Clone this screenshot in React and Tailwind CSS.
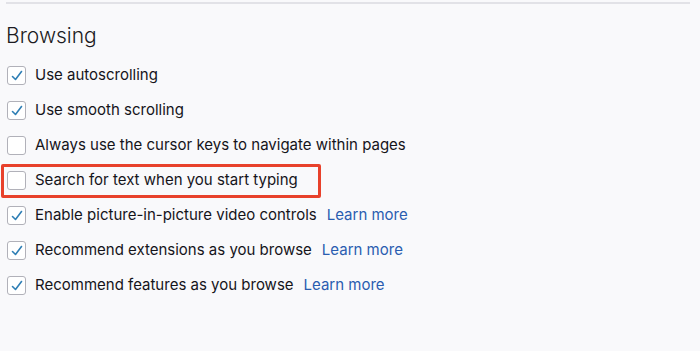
const rows = [
  { label: "Use autoscrolling", checked: true },
  { label: "Use smooth scrolling", checked: true },
  { label: "Always use the cursor keys to navigate within pages", checked: false },
  { label: "Search for text when you start typing", checked: false, highlight: true },
  { label: "Enable picture-in-picture video controls", checked: true, link: true },
  { label: "Recommend extensions as you browse", checked: true, link: true },
  { label: "Recommend features as you browse", checked: true, link: true },
];

const Checkbox = ({ checked }) => (
  <div className="w-[19px] h-[19px] shrink-0 rounded-[3px] border border-[#b1b1b9] bg-white flex items-center justify-center">
    {checked && (
      <svg width="12" height="12" viewBox="0 0 12 12" fill="none">
        <path d="M1.5 6.5 L4.5 9.5 L10.5 1.5" stroke="#2f7fb5" strokeWidth="1.6" strokeLinecap="round" strokeLinejoin="round" />
      </svg>
    )}
  </div>
);

export default function App() {
  return (
    <div className="w-[700px] h-[351px] bg-[#f9f9fb] overflow-hidden" style={{ fontFamily: 'Inter, "Liberation Sans", sans-serif' }}>
      <div className="pt-[2px] pl-[6px] pr-[10px]">
        <div className="h-[2px] bg-[#e2e2e7]"></div>
      </div>
      <h1 className="ml-[6px] mt-[18px] text-[21px] font-light text-[#1c1b22] leading-[28px]">Browsing</h1>
      <div className="mt-[8px] flex flex-col">
        {rows.map((r) => (
          <div key={r.label} className="h-[35px] flex items-center">
            <div
              className={
                r.highlight
                  ? "flex items-center h-[34px] w-[320px] ml-[1px] pl-[3px] border-[3px] border-[#e8412b] rounded-[2px]"
                  : "flex items-center pl-[7px]"
              }
            >
              <Checkbox checked={r.checked} />
              <span className="ml-[9px] text-[15px] text-[#15141a]">{r.label}</span>
              {r.link && <span className="ml-[10px] text-[15px] text-[#2a5db0]">Learn more</span>}
            </div>
          </div>
        ))}
      </div>
    </div>
  );
}
